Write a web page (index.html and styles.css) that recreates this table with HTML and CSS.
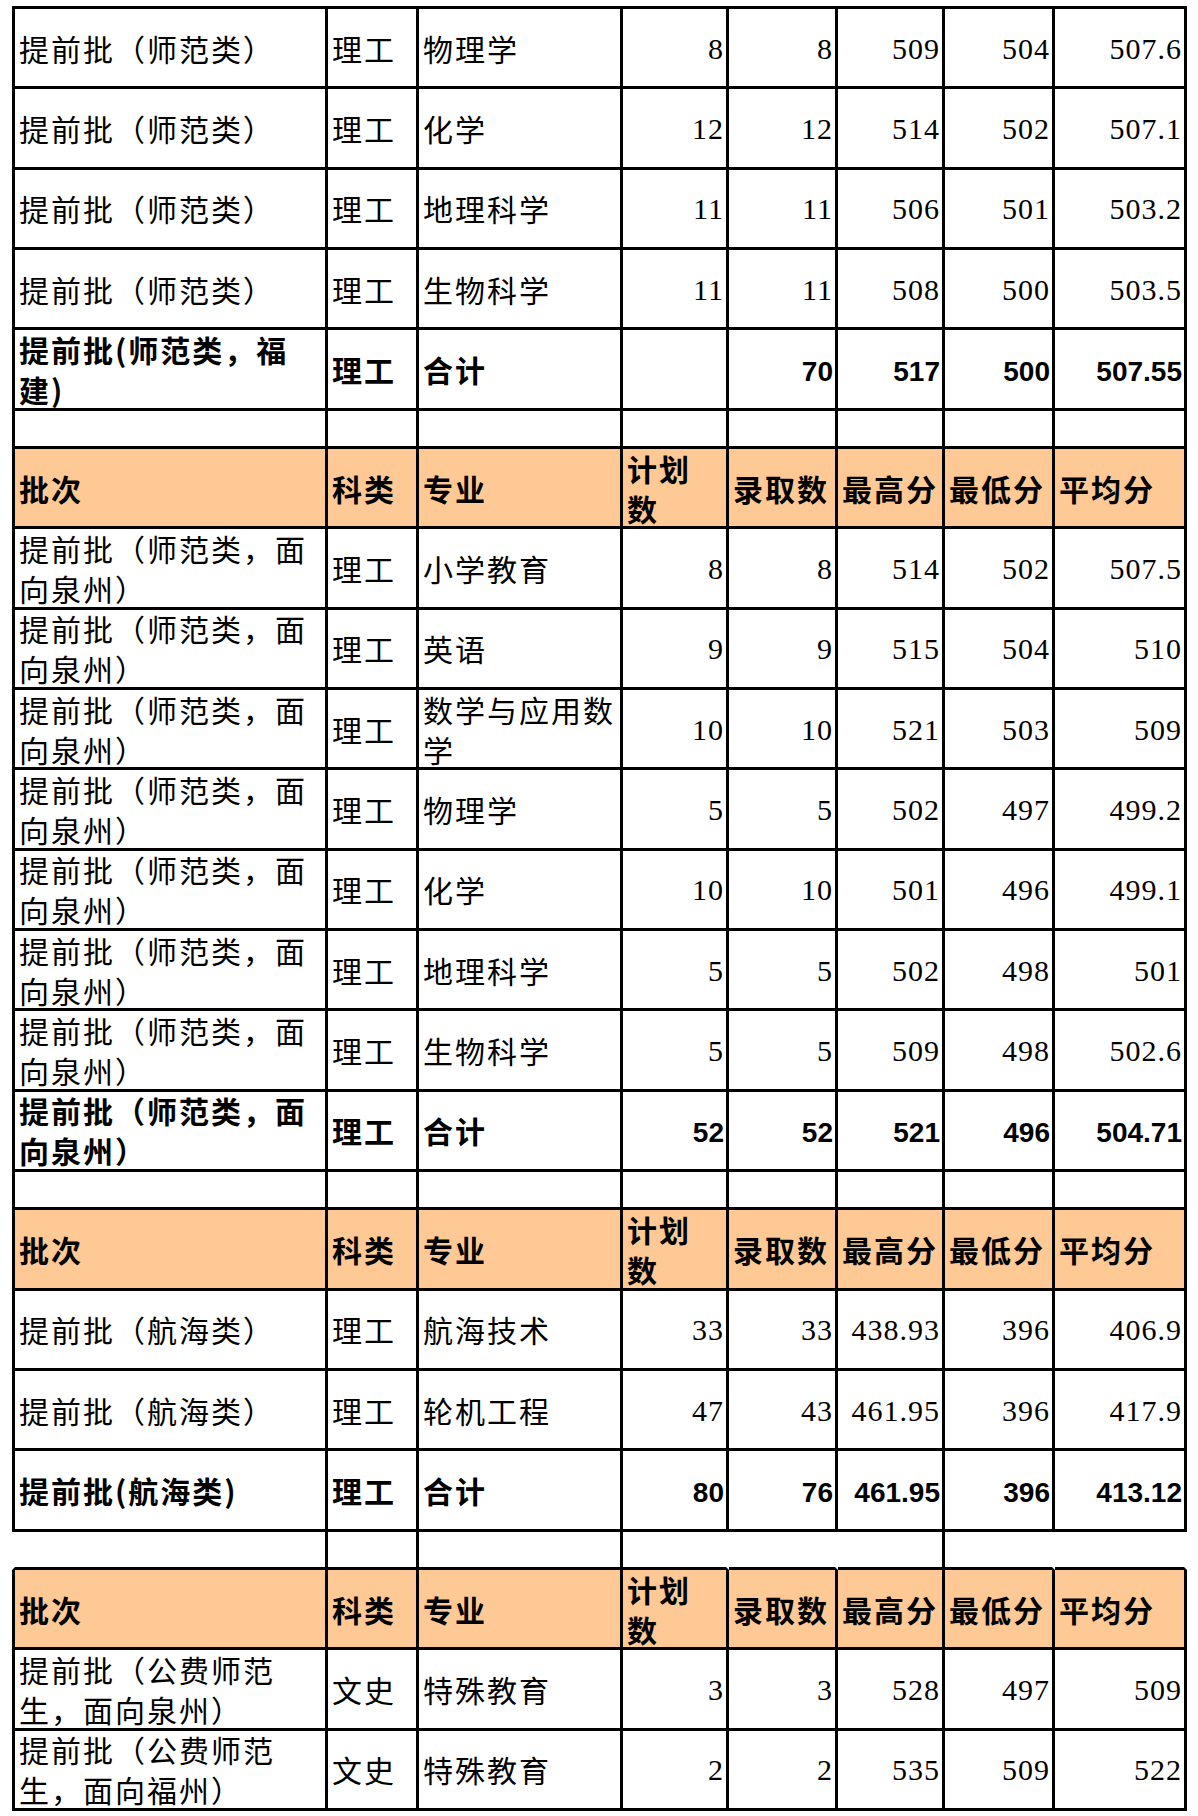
FILE: index.html
```html
<!DOCTYPE html>
<html lang="zh-CN">
<head>
<meta charset="utf-8">
<title>提前批录取分数</title>
<link rel="stylesheet" href="styles.css">
</head>
<body>
<table class="sheet">
  <colgroup>
    <col class="k1"><col class="k2"><col class="k3"><col class="k4"><col class="k5"><col class="k6"><col class="k7"><col class="k8">
  </colgroup>
  <tbody>
    <tr class="first">
      <td class="t">提前批（师范类）</td><td class="t">理工</td><td class="t">物理学</td>
      <td class="n">8</td><td class="n">8</td><td class="n">509</td><td class="n">504</td><td class="n">507.6</td>
    </tr>
    <tr>
      <td class="t">提前批（师范类）</td><td class="t">理工</td><td class="t">化学</td>
      <td class="n">12</td><td class="n">12</td><td class="n">514</td><td class="n">502</td><td class="n">507.1</td>
    </tr>
    <tr>
      <td class="t">提前批（师范类）</td><td class="t">理工</td><td class="t">地理科学</td>
      <td class="n">11</td><td class="n">11</td><td class="n">506</td><td class="n">501</td><td class="n">503.2</td>
    </tr>
    <tr>
      <td class="t">提前批（师范类）</td><td class="t">理工</td><td class="t">生物科学</td>
      <td class="n">11</td><td class="n">11</td><td class="n">508</td><td class="n">500</td><td class="n">503.5</td>
    </tr>
    <tr class="sum">
      <td class="t"><div class="w">提前批(师范类，福建)</div></td><td class="t">理工</td><td class="t">合计</td>
      <td class="n"></td><td class="n">70</td><td class="n">517</td><td class="n">500</td><td class="n">507.55</td>
    </tr>
    <tr class="gap">
      <td></td><td></td><td></td><td></td><td></td><td></td><td></td><td></td>
    </tr>
    <tr class="hd">
      <td class="t">批次</td><td class="t">科类</td><td class="t">专业</td><td class="t nar"><div class="w">计划数</div></td>
      <td class="t">录取数</td><td class="t">最高分</td><td class="t">最低分</td><td class="t">平均分</td>
    </tr>
    <tr>
      <td class="t"><div class="w">提前批（师范类，面向泉州）</div></td><td class="t">理工</td><td class="t">小学教育</td>
      <td class="n">8</td><td class="n">8</td><td class="n">514</td><td class="n">502</td><td class="n">507.5</td>
    </tr>
    <tr>
      <td class="t"><div class="w">提前批（师范类，面向泉州）</div></td><td class="t">理工</td><td class="t">英语</td>
      <td class="n">9</td><td class="n">9</td><td class="n">515</td><td class="n">504</td><td class="n">510</td>
    </tr>
    <tr>
      <td class="t"><div class="w">提前批（师范类，面向泉州）</div></td><td class="t">理工</td><td class="t"><div class="w">数学与应用数学</div></td>
      <td class="n">10</td><td class="n">10</td><td class="n">521</td><td class="n">503</td><td class="n">509</td>
    </tr>
    <tr>
      <td class="t"><div class="w">提前批（师范类，面向泉州）</div></td><td class="t">理工</td><td class="t">物理学</td>
      <td class="n">5</td><td class="n">5</td><td class="n">502</td><td class="n">497</td><td class="n">499.2</td>
    </tr>
    <tr>
      <td class="t"><div class="w">提前批（师范类，面向泉州）</div></td><td class="t">理工</td><td class="t">化学</td>
      <td class="n">10</td><td class="n">10</td><td class="n">501</td><td class="n">496</td><td class="n">499.1</td>
    </tr>
    <tr>
      <td class="t"><div class="w">提前批（师范类，面向泉州）</div></td><td class="t">理工</td><td class="t">地理科学</td>
      <td class="n">5</td><td class="n">5</td><td class="n">502</td><td class="n">498</td><td class="n">501</td>
    </tr>
    <tr>
      <td class="t"><div class="w">提前批（师范类，面向泉州）</div></td><td class="t">理工</td><td class="t">生物科学</td>
      <td class="n">5</td><td class="n">5</td><td class="n">509</td><td class="n">498</td><td class="n">502.6</td>
    </tr>
    <tr class="sum">
      <td class="t"><div class="w">提前批（师范类，面向泉州）</div></td><td class="t">理工</td><td class="t">合计</td>
      <td class="n">52</td><td class="n">52</td><td class="n">521</td><td class="n">496</td><td class="n">504.71</td>
    </tr>
    <tr class="gap">
      <td></td><td></td><td></td><td></td><td></td><td></td><td></td><td></td>
    </tr>
    <tr class="hd">
      <td class="t">批次</td><td class="t">科类</td><td class="t">专业</td><td class="t nar"><div class="w">计划数</div></td>
      <td class="t">录取数</td><td class="t">最高分</td><td class="t">最低分</td><td class="t">平均分</td>
    </tr>
    <tr>
      <td class="t">提前批（航海类）</td><td class="t">理工</td><td class="t">航海技术</td>
      <td class="n">33</td><td class="n">33</td><td class="n">438.93</td><td class="n">396</td><td class="n">406.9</td>
    </tr>
    <tr>
      <td class="t">提前批（航海类）</td><td class="t">理工</td><td class="t">轮机工程</td>
      <td class="n">47</td><td class="n">43</td><td class="n">461.95</td><td class="n">396</td><td class="n">417.9</td>
    </tr>
    <tr class="sum">
      <td class="t">提前批(航海类)</td><td class="t">理工</td><td class="t">合计</td>
      <td class="n">80</td><td class="n">76</td><td class="n">461.95</td><td class="n">396</td><td class="n">413.12</td>
    </tr>
    <tr class="gap open">
      <td class="edge"></td><td class="edge"></td><td class="edge"></td><td></td><td></td><td class="edge"></td><td></td><td></td>
    </tr>
    <tr class="hd">
      <td class="t">批次</td><td class="t">科类</td><td class="t">专业</td><td class="t nar"><div class="w">计划数</div></td>
      <td class="t">录取数</td><td class="t">最高分</td><td class="t">最低分</td><td class="t">平均分</td>
    </tr>
    <tr>
      <td class="t"><div class="w">提前批（公费师范生，面向泉州）</div></td><td class="t">文史</td><td class="t">特殊教育</td>
      <td class="n">3</td><td class="n">3</td><td class="n">528</td><td class="n">497</td><td class="n">509</td>
    </tr>
    <tr>
      <td class="t"><div class="w">提前批（公费师范生，面向福州）</div></td><td class="t">文史</td><td class="t">特殊教育</td>
      <td class="n">2</td><td class="n">2</td><td class="n">535</td><td class="n">509</td><td class="n">522</td>
    </tr>
  </tbody>
</table>
</body>
</html>
```
FILE: styles.css
```css
* { box-sizing: border-box; }

body {
  margin: 0;
  background: #fff;
}

.sheet {
  margin: 6px 0 0 12px;
  width: 1175px;
  table-layout: fixed;
  border-collapse: separate;
  border-spacing: 0;
}

.k1 { width: 316px; }
.k2 { width: 91px; }
.k3 { width: 204px; }
.k4 { width: 106px; }
.k5 { width: 109px; }
.k6 { width: 107px; }
.k7 { width: 110px; }
.k8 { width: 132px; }

.sheet tr { height: 80.33px; }
.sheet tr.first { height: 83.33px; }
.sheet tr.gap { height: 38.33px; }

.sheet td {
  border-right: 3px solid #000;
  border-bottom: 3px solid #000;
  padding: 0 2px 0 4px;
  vertical-align: middle;
  font-family: "Noto Sans CJK SC", sans-serif;
  font-size: 30px;
  letter-spacing: 2px;
  line-height: 40px;
  color: #000;
}

.sheet td:first-child {
  border-left: 3px solid #000;
  padding-right: 10px;
}

.sheet tr.first td { border-top: 3px solid #000; }

.sheet td.n {
  text-align: right;
  font-family: "Liberation Serif", serif;
  letter-spacing: 1px;
  padding-top: 2px;
}

.sheet td.nar { padding-right: 10px; }

.w { margin: -2px 0; }

.sum td { font-weight: 700; }

.sheet .sum td.n {
  font-family: "Liberation Sans", sans-serif;
  font-size: 28px;
  letter-spacing: 0;
  padding-top: 6px;
}

.hd td {
  background: #ffc995;
  font-weight: 700;
}

.sheet .open td { border-right-color: transparent; }
.sheet .open td:first-child { border-left-color: transparent; }
.sheet .open td.edge { border-right-color: #000; }
```
